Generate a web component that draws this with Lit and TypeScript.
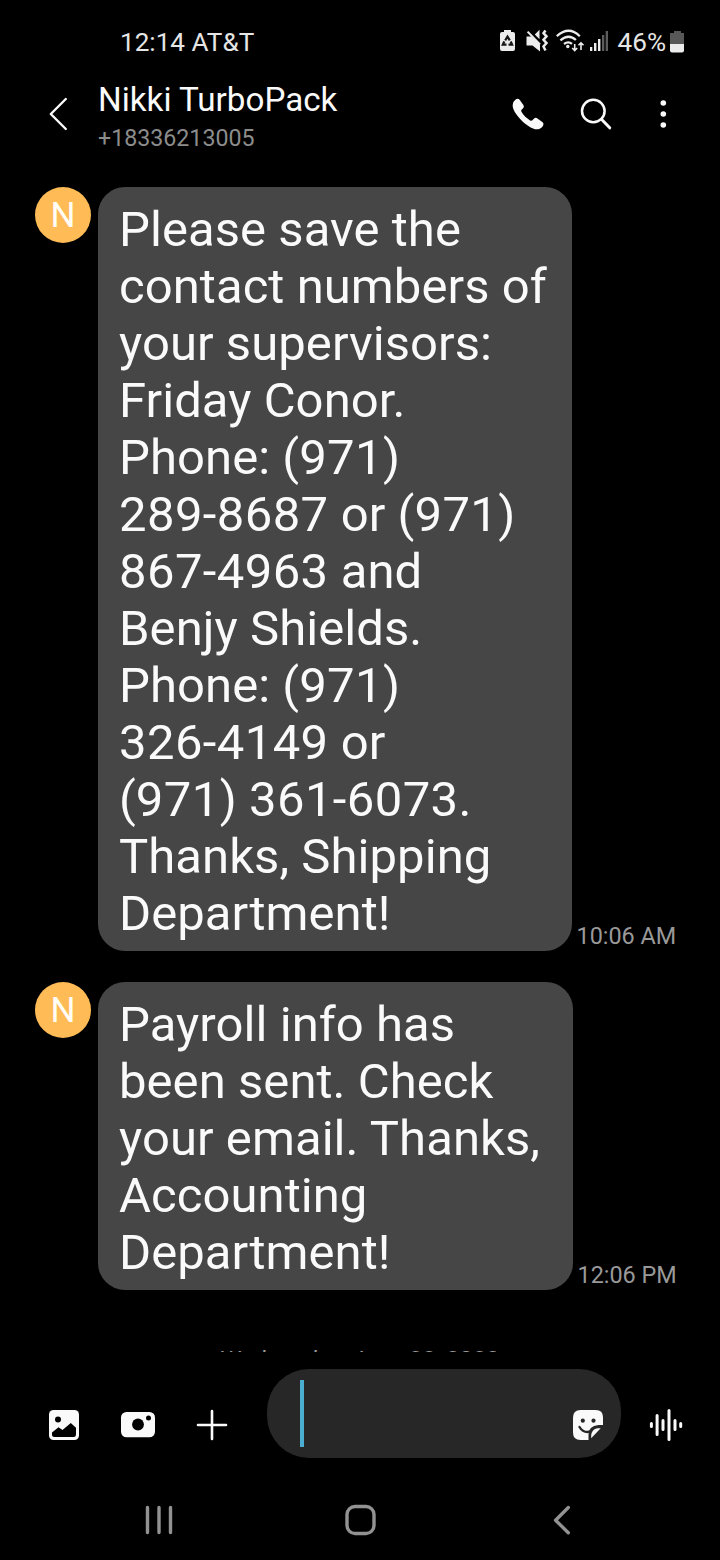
import { LitElement, html, svg, css } from "lit";
import { customElement, property } from "lit/decorators.js";
import { styleMap } from "lit/directives/style-map.js";

interface Message {
  lines: string[];
  time: string;
  width: number;
}

const messages: Message[] = [
  {
    lines: [
      "Please save the",
      "contact numbers of",
      "your supervisors:",
      "Friday Conor.",
      "Phone: (971)",
      "289-8687 or (971)",
      "867-4963 and",
      "Benjy Shields.",
      "Phone: (971)",
      "326-4149 or",
      "(971) 361-6073.",
      "Thanks, Shipping",
      "Department!",
    ],
    time: "10:06 AM",
    width: 474,
  },
  {
    lines: ["Payroll info has", "been sent. Check", "your email. Thanks,", "Accounting", "Department!"],
    time: "12:06 PM",
    width: 475,
  },
];

@customElement("status-bar")
export class StatusBar extends LitElement {
  static styles = css`
    :host { display: flex; align-items: center; height: 84px; padding: 0 34px 0 120px; box-sizing: border-box; font-size: 26.100px; color: #e6e6e6; }
    .clock { flex: 1; }
    .icons { display: block; margin-right: 7px; }
    .battery { display: block; margin-left: 4px; }
  `;

  render() {
    return html`
      <span class="clock">12:14 AT&amp;T</span>
      <svg class="icons" width="112" height="26" viewBox="499 29 112 26" fill="#ececec">
        <path d="M504 30h7v2h2q2 0 2 2v15q0 2-2 2h-11q-2 0-2-2V34q0-2 2-2h2z" />
        <g fill="none" stroke="#161616" stroke-width="2.200">
          <path d="M505.200 40.300l2.300-3.700 2.300 3.700M510.700 41.500l1.400 3.200h-3.600M506.500 44.700h-3.700l1.500-3.300" />
        </g>
        <path d="M526.500 36.500h5l8.500 8.500v6.500l-7.500-6h-6zM534.800 34.500l4.700-4.700v9.400z" />
        <path d="M527.600 31.600L540 44.500" stroke="#ececec" stroke-width="2" />
        <path d="M545.500 30.500l-2 2.700 3 3.200-3 3.400 3 3.300-3 3.400 2 4" fill="none" stroke="#ececec" stroke-width="2.500" />
        <g fill="none" stroke="#ececec" stroke-width="2.300">
          <path d="M556.800 36.200q12-10.800 23 0M560.400 40.300q8.200-7 15.500-.3M564 44q4.300-3.200 8-.2" />
          <path d="M574.700 44v6.500M572.200 48l2.500 2.500 2.500-2.500M581 50v-7M578.500 45.300l2.500-2.500 2.500 2.500" stroke-width="1.600" />
        </g>
        <circle cx="567.800" cy="46.500" r="1.700" />
        <path d="M590 47h2.300v4H590zM594 43h2.400v8H594zM598 39h2.400v12H598z" />
        <path d="M602 35h2.300v16H602zM605.700 31h2.300v20h-2.300z" fill="#5c5c5c" />
      </svg>
      <span>46%</span>
      <svg class="battery" width="16" height="24" viewBox="670 29 16 24">
        <path d="M674 30h7v2h3v11h-14V32h4z" fill="#585858" />
        <path d="M670 43h14v6.500q0 2-2 2h-10q-2 0-2-2z" fill="#ececec" />
      </svg>
    `;
  }
}

@customElement("chat-header")
export class ChatHeader extends LitElement {
  static styles = css`
    :host { display: flex; align-items: flex-start; height: 86px; padding-left: 48px; }
    .back { display: block; margin: 12px 28px 0 0; }
    .who { flex: 1; }
    .name { font-size: 33.200px; line-height: 36px; margin-top: -2px; color: #fafafa; }
    .number { font-size: 23.200px; line-height: 28px; margin-top: 6px; color: #8c8c8c; }
    .actions { display: block; margin-top: 12px; }
  `;

  render() {
    return html`
      <svg class="back" width="22" height="36" viewBox="48 96 22 36" fill="none" stroke="#fafafa" stroke-width="2.400" stroke-linecap="round" stroke-linejoin="round">
        <path d="M65.800 99L50.800 114l15 15" />
      </svg>
      <div class="who">
        <div class="name">Nikki TurboPack</div>
        <div class="number">+18336213005</div>
      </div>
      <svg class="actions" width="210" height="36" viewBox="510 96 210 36" fill="#fafafa">
        <path d="M515.600 99.500q2.400-1.600 4.200.4l3.600 5q1.200 1.800-.3 3.300l-1.600 1.500q-.8 1 .1 2.400c2.100 3.500 4.900 6.200 8.500 8.300q1.300.8 2.300-.1l1.700-1.700q1.500-1.400 3.300-.2l4.900 3.500q2 1.600.6 4-2.200 3.400-6.400 3.400c-3.800 0-10.700-4.400-15.600-9.600-5-5.200-8.600-10.900-8.200-14.800q.3-3.600 2.900-5.400z" />
        <circle cx="593.300" cy="111" r="11.300" fill="none" stroke="#fafafa" stroke-width="2.500" />
        <path d="M601.700 119.500l8 8.300" stroke="#fafafa" stroke-width="3" stroke-linecap="round" />
        <circle cx="663.300" cy="103" r="2.800" /><circle cx="663.300" cy="114" r="2.800" /><circle cx="663.300" cy="125" r="2.800" />
      </svg>
    `;
  }
}

@customElement("chat-message")
export class ChatMessage extends LitElement {
  @property({ attribute: false }) message!: Message;

  static styles = css`
    :host { display: flex; align-items: flex-start; padding-left: 35px; }
    .avatar { width: 56px; height: 56px; box-sizing: border-box; padding-top: 1px; margin-right: 7px; border-radius: 50%; background: #ffbb55; color: #fffdf5; font-size: 35px; line-height: 56px; text-align: center; flex: none; }
    .bubble { box-sizing: border-box; flex: none; padding: 14px 0 9px 21px; border-radius: 27px; background: #464646; color: #fafafa; font-size: 49px; letter-spacing: 0.060px; line-height: 57px; white-space: nowrap; }
    .digits { letter-spacing: 0.400px; }
    .time { align-self: flex-end; margin-left: 4.500px; font-size: 23.400px; line-height: 30px; color: #999; white-space: nowrap; }
  `;

  render() {
    const line = (text: string) =>
      html`<div>${text.split(/([\d-]+)/).map((part, i) => (i % 2 ? html`<span class="digits">${part}</span>` : part))}</div>`;
    return html`
      <div class="avatar">N</div>
      <div class="bubble" style=${styleMap({ width: `${this.message.width}px` })}>${this.message.lines.map(line)}</div>
      <div class="time">${this.message.time}</div>
    `;
  }
}

@customElement("message-composer")
export class MessageComposer extends LitElement {
  static styles = css`
    :host { display: flex; align-items: flex-start; height: 128px; padding-top: 17px; box-sizing: border-box; }
    .tools { display: block; margin-left: 40px; }
    .field { width: 354px; height: 89px; margin-left: 27px; border-radius: 42px; background: #272727; display: flex; align-items: flex-start; justify-content: space-between; box-sizing: border-box; padding: 11px 17px 0 33px; }
    .caret { width: 4px; height: 67px; background: #4baed0; }
    .sticker { display: block; margin-top: 29px; }
    .voice { display: block; margin: 38px 0 0 27px; }
  `;

  render() {
    return html`
      <svg class="tools" width="200" height="89" viewBox="40 1369 200 89">
        <rect x="49" y="1410" width="30" height="30" rx="4.500" fill="#fafafa" />
        <circle cx="58" cy="1419.500" r="3" fill="#000" />
        <path d="M52 1432.500l6.500-5.300 4 2.900 8.300-7.200 5.200 4.900v6.700q0 2.500-2.300 2.500H54.500q-2.500 0-2.500-2.500z" fill="#000" />
        <rect x="121" y="1412" width="34" height="25.300" rx="5.500" fill="#fafafa" />
        <circle cx="138" cy="1424.500" r="5.900" fill="#000" /><circle cx="148.500" cy="1418" r="2.500" fill="#000" />
        <path d="M212 1411v28M198 1425h28" stroke="#fafafa" stroke-width="2.600" stroke-linecap="round" />
      </svg>
      <div class="field">
        <div class="caret"></div>
        <svg class="sticker" width="32" height="32" viewBox="572 1409 32 32">
          <path d="M580.500 1410h15.200q7.300 0 7.300 7.300v7.700h-4.500q-10.300 1-10 10v5h-8q-7.500 0-7.500-7.500v-15q0-7.500 7.500-7.500z" fill="#fafafa" />
          <circle cx="582.800" cy="1420.700" r="2.100" fill="#272727" /><circle cx="593.500" cy="1420.700" r="2.100" fill="#272727" />
          <path d="M579.500 1427q3 5 8 5 3.300 0 6-3" fill="none" stroke="#272727" stroke-width="2.400" stroke-linecap="round" />
          <path d="M600.700 1428.300h-3.200q-5.700 1-6.300 6.700v3.200z" fill="#fafafa" />
        </svg>
      </div>
      <svg class="voice" width="36" height="36" viewBox="648 1407 36 36" fill="none" stroke="#fafafa" stroke-width="3" stroke-linecap="round">
        <path d="M651.400 1423.500v3M657.100 1415.500v19M663 1420.500v9M669 1410.500v29M675 1420.500v9M680.700 1423.500v3" />
      </svg>
    `;
  }
}

@customElement("nav-bar")
export class NavBar extends LitElement {
  static styles = css`
    :host { display: flex; align-items: center; justify-content: space-between; height: 80px; box-sizing: border-box; padding: 0 148px 0 143px; color: #929292; }
    .key { display: block; overflow: visible; }
  `;

  render() {
    const key = (glyph: unknown) => html`<svg class="key" width="32" height="32" viewBox="0 0 32 32" fill="none" stroke="currentColor" stroke-width="3.400" stroke-linecap="round" stroke-linejoin="round">${glyph}</svg>`;
    return html`
      ${key(svg`<path d="M4.500 3.500v25M16 3.500v25M27.500 3.500v25" />`)}
      ${key(svg`<rect x="5" y="2.500" width="27" height="27" rx="8" />`)}
      ${key(svg`<path d="M28.300 3.500L15.600 16.200l12.700 12.600" />`)}
    `;
  }
}

@customElement("app-root")
export class AppRoot extends LitElement {
  static styles = css`
    :host { display: flex; flex-direction: column; width: 720px; height: 1560px; overflow: hidden; background: #000; font-family: Roboto, sans-serif; }
    .thread { height: 1182px; flex: none; overflow: hidden; display: flex; flex-direction: column; gap: 31px; padding-top: 17px; box-sizing: border-box; }
    .thread > * { flex: none; }
    .date { margin-top: 24px; line-height: 30px; font-size: 23.700px; color: #999; text-align: center; }
  `;

  render() {
    return html`
      <status-bar></status-bar>
      <chat-header></chat-header>
      <main class="thread">
        ${messages.map((m) => html`<chat-message .message=${m}></chat-message>`)}
        <div class="date">Wednesday, June 22, 2022</div>
      </main>
      <message-composer></message-composer>
      <nav-bar></nav-bar>
    `;
  }
}
